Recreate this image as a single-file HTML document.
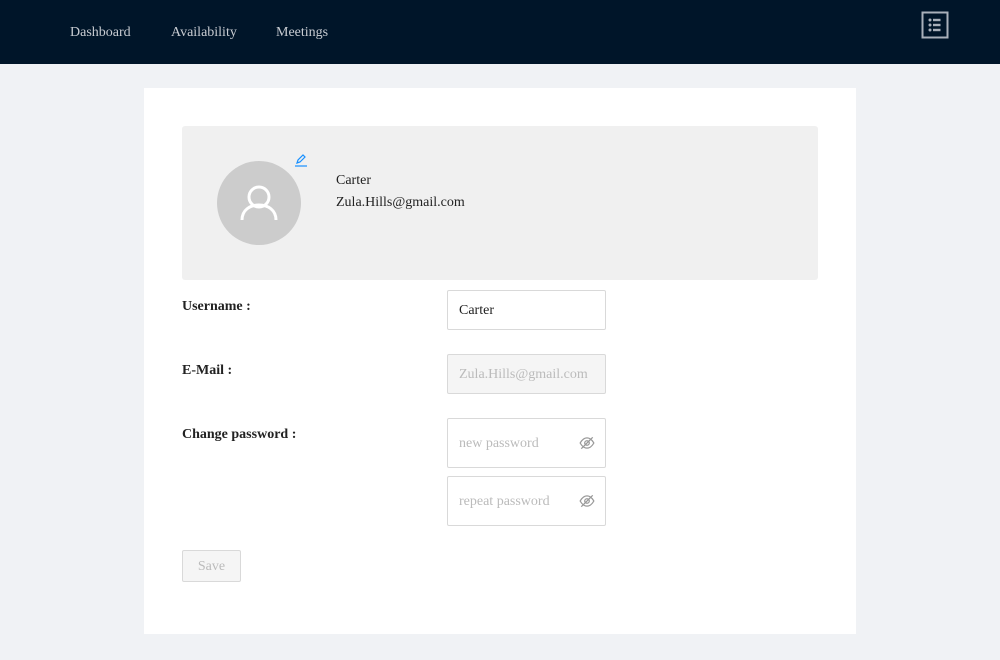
<!DOCTYPE html>
<html><head><meta charset="utf-8"><style>
*{box-sizing:border-box;margin:0;padding:0}
body{width:1000px;height:660px;background:#f0f2f5;font-family:"Liberation Serif",serif;font-size:14px;color:#222;position:relative;overflow:hidden}
.nav{position:absolute;left:0;top:0;width:1000px;height:64px;background:#001529}
.nav a{position:absolute;top:25px;color:#c8ccd2;font-size:14px;text-decoration:none}
.card{position:absolute;left:144px;top:88px;width:712px;height:546px;background:#fff}
.prof{position:absolute;left:38px;top:38px;width:636px;height:154px;background:#f0f0f0;border-radius:3px}
.av{position:absolute;left:35px;top:35px;width:84px;height:84px;border-radius:50%;background:#ccc}
.abs{position:absolute}
.lbl{position:absolute;left:38px;font-weight:bold;font-size:14px;color:#222}
.inp{position:absolute;left:303px;width:159px;height:40px;border:1px solid #d9d9d9;border-radius:2px;padding-left:11px;padding-top:1px;line-height:38px;font-size:14px}
.ph{color:#bbb}
</style></head><body>
<div class="nav">
<a style="left:70px">Dashboard</a>
<a style="left:171px">Availability</a>
<a style="left:276px">Meetings</a>
<svg class="abs" style="left:921px;top:11px" width="28" height="28" viewBox="0 0 28 28"><rect x="1.5" y="1.5" width="25" height="25" fill="none" stroke="#a9b0ba" stroke-width="2"/><g fill="#a9b0ba"><circle cx="9" cy="9" r="1.5"/><circle cx="9" cy="14" r="1.5"/><circle cx="9" cy="19" r="1.5"/><rect x="12" y="7.8" width="7.5" height="2.4"/><rect x="12" y="12.8" width="7.5" height="2.4"/><rect x="12" y="17.8" width="7.5" height="2.4"/></g></svg>
</div>
<div class="card">
<div class="prof">
<div class="av"><svg width="84" height="84" viewBox="0 0 84 84"><circle cx="42" cy="36" r="10" fill="none" stroke="#fff" stroke-width="3"/><path d="M25 59c0-10 8-15 17-15s17 5 17 15" fill="none" stroke="#fff" stroke-width="3"/></svg></div>
<svg class="abs" style="left:112px;top:27px" width="14" height="14" viewBox="0 0 14 14"><path d="M3 10l1-3 5-5 2 2-5 5z" fill="none" stroke="#1890ff" stroke-width="1.2"/><path d="M1 13h12" stroke="#1890ff" stroke-width="1.2"/></svg>
<div class="abs" style="left:154px;top:47px">Carter</div>
<div class="abs" style="left:154px;top:69px">Zula.Hills@gmail.com</div>
</div>
<div class="lbl" style="top:211px">Username :</div>
<div class="inp" style="top:202px">Carter</div>
<div class="lbl" style="top:275px">E-Mail :</div>
<div class="inp ph" style="top:266px;background:#f5f5f5">Zula.Hills@gmail.com</div>
<div class="lbl" style="top:339px">Change password :</div>
<div class="inp ph" style="top:330px;height:50px;line-height:48px">new password
<svg class="abs" style="left:131px;top:16px" width="16" height="16" viewBox="0 0 14 14"><path d="M1 7c2-3.5 4-4.5 6-4.5S11 3.5 13 7c-2 3.5-4 4.5-6 4.5S3 10.5 1 7z" fill="none" stroke="#999" stroke-width="1.1"/><circle cx="7" cy="7" r="2" fill="none" stroke="#999" stroke-width="1.1"/><path d="M2 12L12 2" stroke="#999" stroke-width="1.1"/></svg></div>
<div class="inp ph" style="top:388px;height:50px;line-height:48px">repeat password
<svg class="abs" style="left:131px;top:16px" width="16" height="16" viewBox="0 0 14 14"><path d="M1 7c2-3.5 4-4.5 6-4.5S11 3.5 13 7c-2 3.5-4 4.5-6 4.5S3 10.5 1 7z" fill="none" stroke="#999" stroke-width="1.1"/><circle cx="7" cy="7" r="2" fill="none" stroke="#999" stroke-width="1.1"/><path d="M2 12L12 2" stroke="#999" stroke-width="1.1"/></svg></div>
<div class="abs" style="left:38px;top:462px;width:59px;height:32px;border:1px solid #d9d9d9;background:#f5f5f5;border-radius:2px;color:#bbb;text-align:center;line-height:32px">Save</div>
</div>
</body></html>
